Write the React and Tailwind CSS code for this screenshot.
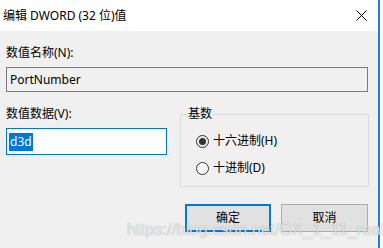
import React from "react";

export default function App() {
  const font = { fontFamily: '"Noto Sans", "Noto Sans CJK SC", sans-serif' };
  return (
    <div className="relative flex h-[248px] w-[383px] overflow-hidden bg-white text-[12px] text-black" style={font}>
      <div className="flex w-[378px] flex-col">
        <div className="flex h-[31px] items-center justify-between bg-white pl-[3px] pr-[11px]">
          <span className="leading-[16px]">编辑 DWORD (32 位)值</span>
          <svg width="11" height="11" viewBox="0 0 11 11" className="block">
            <path d="M0.5 0.5 L10.5 10.5 M10.5 0.5 L0.5 10.5" stroke="#000" strokeWidth="1" fill="none" />
          </svg>
        </div>
        <div className="flex flex-1 flex-col bg-[#f0f0f0] pl-[6px]">
          <div className="mt-[14px] leading-[16px]">数值名称(N):</div>
          <div className="mt-[6px] flex h-[25px] w-[362px] items-center border border-[#7a7a7a] bg-[#f0f0f0] pl-[3px] leading-[16px]">
            PortNumber
          </div>
          <div className="mt-[14px] flex gap-[13px]">
            <div className="flex w-[161px] flex-col">
              <div className="leading-[16px]">数值数据(V):</div>
              <div className="mt-[6px] flex h-[27px] items-center border border-[#0078d7] bg-white pl-[2px]">
                <span className="bg-[#0078d7] px-[1px] leading-[18px] text-white">d3d</span>
              </div>
            </div>
            <fieldset className="h-[81px] w-[189px] border border-[#dcdcdc] pl-[15px]">
              <legend className="ml-[-9px] px-[1px] leading-[16px]">基数</legend>
              <div className="mt-[11px] flex items-center leading-[16px]">
                <span className="flex h-[13px] w-[13px] items-center justify-center rounded-full border border-[#333]">
                  <span className="h-[7px] w-[7px] rounded-full bg-[#333]" />
                </span>
                <span className="ml-[4px]">十六进制(H)</span>
              </div>
              <div className="mt-[11px] flex items-center leading-[16px]">
                <span className="h-[13px] w-[13px] rounded-full border border-[#333] bg-white" />
                <span className="ml-[4px]">十进制(D)</span>
              </div>
            </fieldset>
          </div>
          <div className="mt-[17px] flex gap-[10px] pl-[179px]">
            <button className="flex h-[28px] w-[86px] items-center justify-center border-2 border-[#0078d7] bg-[#e1e1e1] leading-[16px]">
              确定
            </button>
            <button className="flex h-[28px] w-[87px] items-center justify-center border border-[#adadad] bg-[#e1e1e1] leading-[16px]">
              取消
            </button>
          </div>
        </div>
      </div>
      <div className="w-[2px] bg-[#2080d8]" />
      <div className="flex-1 bg-white" />
      <div
        className="pointer-events-none absolute left-[127px] top-[220px] text-[16.5px] leading-[18px] text-white/80 [text-shadow:0_0_1px_rgba(0,0,0,0.45)]"
        style={{ fontFamily: '"Liberation Sans", Arial, sans-serif' }}
      >
        https://blog.csdn.net/GX_1_11_real
      </div>
    </div>
  );
}
